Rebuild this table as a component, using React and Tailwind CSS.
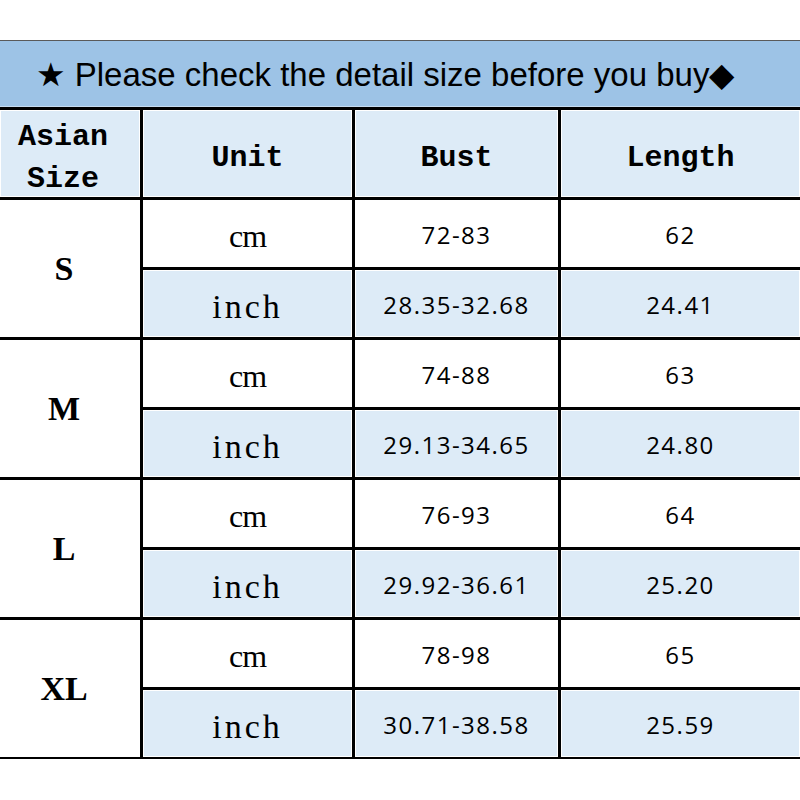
const sizes = [
  { size: 'S', rows: [['cm', '72-83', '62'], ['inch', '28.35-32.68', '24.41']] },
  { size: 'M', rows: [['cm', '74-88', '63'], ['inch', '29.13-34.65', '24.80']] },
  { size: 'L', rows: [['cm', '76-93', '64'], ['inch', '29.92-36.61', '25.20']] },
  { size: 'XL', rows: [['cm', '78-98', '65'], ['inch', '30.71-38.58', '25.59']] },
]

const head = "flex items-center justify-center text-center bg-[#ddebf7] shadow-[inset_0_0_0_1px_#ffffff] font-['Liberation_Mono',monospace] font-bold text-[30px] leading-[42px] text-black pt-[8px]"

function Cell({ blue, className = '', children }) {
  return (
    <div className={`flex items-center justify-center ${blue ? 'bg-[#ddebf7] shadow-[inset_0_0_0_1px_#ffffff]' : 'bg-white'} ${className}`}>
      {children}
    </div>
  )
}

export default function App() {
  return (
    <div className="w-[800px] h-[800px] bg-white pt-[40px]">
      <div className="border-t border-[#5a5a5a] border-b-[2px] border-b-black">
        <div className="grid grid-cols-[140px_209px_203px_1fr] grid-rows-[66px_87px_repeat(8,67px)] gap-x-[3px] gap-y-[3px] bg-black">
          <div className="col-span-4 flex items-center justify-center bg-[#9dc3e6] shadow-[inset_0_-1px_0_#c6dcf0] font-['Liberation_Sans',Arial,sans-serif] text-[33px] text-black pr-[30px] pt-[2px]">
            ★ Please check the detail size before you buy◆
          </div>
          <div className={`${head} pr-[14px]`}>Asian<br />Size</div>
          <div className={head}>Unit</div>
          <div className={head}>Bust</div>
          <div className={head}>Length</div>
          {sizes.map((g) => (
            <div key={g.size} className="contents">
              <Cell className="row-span-2 pr-[12px] font-['Liberation_Serif',serif] font-bold text-[34px] text-black">
                {g.size}
              </Cell>
              {g.rows.map(([unit, bust, len], i) => (
                <div key={unit} className="contents">
                  <Cell
                    blue={i === 1}
                    className={
                      i === 1
                        ? "pt-[6px] font-['Liberation_Serif',serif] text-[34px] tracking-[3px] text-black"
                        : "pt-[4px] font-['Liberation_Serif',serif] text-[32px] tracking-[-1px] text-black"
                    }
                  >
                    {unit}
                  </Cell>
                  <Cell blue={i === 1} className="pt-[2px] font-['Open_Sans',sans-serif] text-[24px] tracking-[1.5px] text-black">
                    {bust}
                  </Cell>
                  <Cell blue={i === 1} className="pt-[2px] font-['Open_Sans',sans-serif] text-[24px] tracking-[1.5px] text-black">
                    {len}
                  </Cell>
                </div>
              ))}
            </div>
          ))}
        </div>
      </div>
    </div>
  )
}
